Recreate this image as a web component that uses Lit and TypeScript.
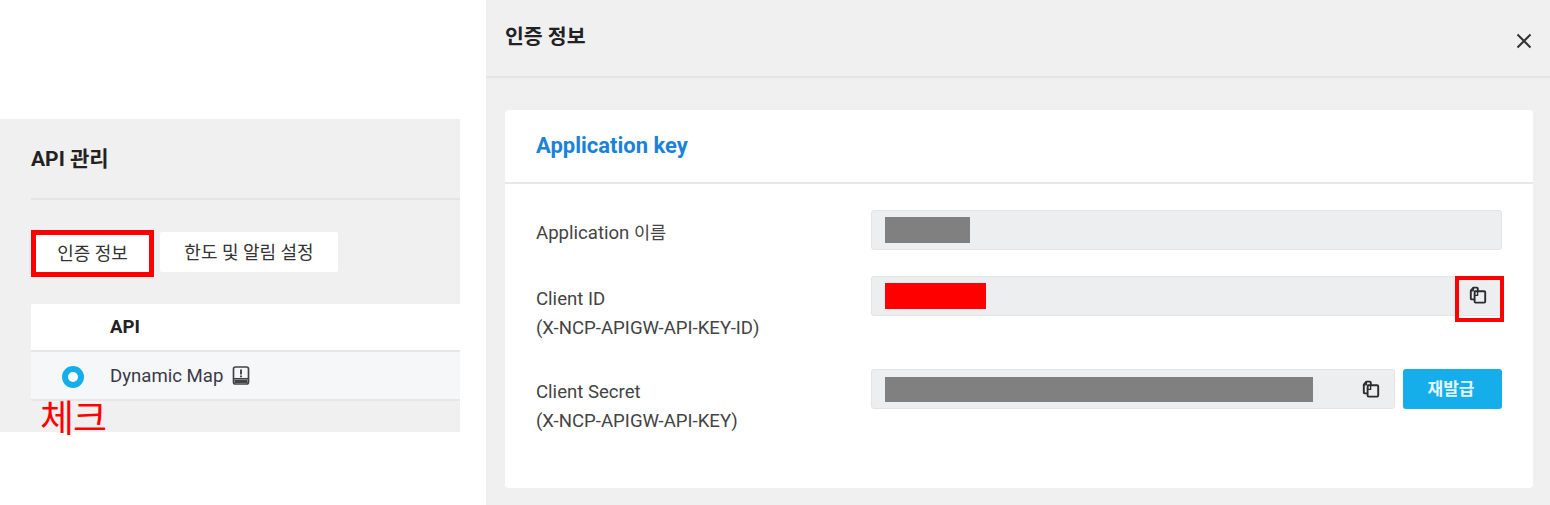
import { LitElement, html, css, svg } from "lit";
import { customElement } from "lit/decorators.js";

const copyIcon = svg`<svg class="copy" viewBox="0 0 18 18" width="18" height="18" fill="none" stroke="#2c2c2c" stroke-width="1.9" stroke-linejoin="round"><path d="M5.6 13.4H2.8a1 1 0 0 1-1-1V4.6L4.4 1.6h3.4a1 1 0 0 1 1 1v2.6"/><path d="M6 5.2h9.2a1 1 0 0 1 1 1v9.4a1 1 0 0 1-1 1H6.6a1 1 0 0 1-1-1V7.4z"/><path d="M8.6 5.4v4H5.8" stroke-width="1.4"/><path d="M4.4 1.8v3H2" stroke-width="1.3"/></svg>`;

@customElement("app-root")
export class AppRoot extends LitElement {
  static styles = css`
    :host { display: flex; width: 1550px; height: 505px; overflow: hidden; background: #fff; font-family: Roboto, "Noto Sans CJK KR", sans-serif; color: #333; font-size: 18.6px; }
    .left { position: relative; box-sizing: border-box; width: 460px; height: 313px; margin-top: 119px; margin-right: 26px; background: #f0f0f0; padding-left: 31px; }
    .lhead { box-sizing: border-box; height: 81px; border-bottom: 2px solid #e4e4e4; display: flex; align-items: center; padding-bottom: 4px; font-size: 21px; font-weight: 700; color: #222; }
    .tabs { display: flex; gap: 6px; margin-top: 32px; height: 40px; }
    .tab { box-sizing: border-box; height: 40px; background: #fff; border-radius: 2px; display: flex; align-items: center; justify-content: center; font-size: 18px; color: #333; padding-bottom: 2px; }
    .tab.one { width: 123px; height: 47px; margin-top: -2px; border: 5px solid #f00; border-radius: 0; background: #fff; padding-bottom: 4px; }
    .tab.two { width: 178px; }
    .thead { margin-top: 32px; height: 46px; background: #fff; border-bottom: 2px solid #e6e6e6; display: flex; align-items: center; padding-left: 79px; font-weight: 700; font-size: 18.6px; color: #222; border-radius: 2px 0 0 0; }
    .trow { height: 47px; background: #f6f7f9; border-bottom: 2px solid #e6e6e6; display: flex; align-items: center; font-size: 18.6px; color: #3a3a4a; }
    .radio { box-sizing: border-box; width: 22px; height: 22px; border: 6px solid #15aeea; border-radius: 50%; background: #fff; margin: 3px 26px 0 31px; }
    .book { margin-left: 9px; }
    .check { position: absolute; left: 40px; top: 276px; font-size: 37px; line-height: 42px; color: #f00; font-family: "Noto Sans CJK KR", sans-serif; letter-spacing: -1px; }
    .right { width: 1064px; height: 505px; background: #f0f0f0; display: flex; flex-direction: column; }
    .rhead { box-sizing: border-box; height: 78px; border-bottom: 2px solid #e4e4e4; display: flex; justify-content: space-between; padding: 24px 18px 0 19px; font-size: 20.5px; font-weight: 700; color: #222; }
    .rhead span { line-height: 26px; }
    .close { margin-top: 9px; }
    .card { box-sizing: border-box; width: 1028px; height: 378px; margin: 32px 0 0 19px; background: #fff; border-radius: 4px; }
    .ctitle { box-sizing: border-box; height: 74px; border-bottom: 2px solid #e8e8e8; padding: 0 0 2px 31px; display: flex; align-items: center; font-size: 22px; font-weight: 700; color: #1a82d9; }
    .form { padding: 26px 31px 0; display: flex; flex-direction: column; }
    .row { display: grid; grid-template-columns: 335px 1fr; font-size: 18.6px; line-height: 29px; color: #444; }
    .row.a { height: 66px; }
    .row.b { height: 93px; }
    .lab { padding-top: 9px; }
    .ko { font-size: 17.5px; }
    .ctrl { display: flex; gap: 8px; height: 40px; }
    .input { position: relative; box-sizing: border-box; flex: 1; height: 40px; background: #edeef0; border: 1px solid #e4e4e4; border-radius: 3px; display: flex; align-items: center; justify-content: space-between; padding: 0 14px 0 13px; }
    .mask { display: block; }
    .mask.gray { background: #808080; }
    .mask.red { background: #f00; }
    .btn { width: 99px; height: 40px; background: #15aeea; border-radius: 3px; color: #e4f6fd; font-weight: 700; font-size: 17px; display: flex; align-items: center; justify-content: center; padding-right: 3px; box-sizing: border-box; }
    .copybox { position: absolute; right: -3px; top: -1px; box-sizing: border-box; width: 49px; height: 46px; border: 4px solid #f00; display: flex; align-items: center; justify-content: center; padding: 0 3px 8px 0; }
    .copy { display: block; }
    .sec { padding-right: 14px; }
  `;

  render() {
    return html`
      <div class="left">
        <div class="lhead">API 관리</div>
        <div class="tabs">
          <div class="tab one">인증 정보</div>
          <div class="tab two">한도 및 알림 설정</div>
        </div>
        <div class="thead">API</div>
        <div class="trow">
          <span class="radio"></span>
          <span>Dynamic Map</span>
          <svg class="book" viewBox="0 0 18 19" width="18" height="19" fill="none" stroke="#444" stroke-width="1.7"><rect x="1.5" y="1" width="15" height="17" rx="2"/><path d="M2 12.8h14"/><path d="M9 3.5v5M9 9.6v1.6" stroke-width="1.9"/><path d="M2.5 15.5h13" stroke-width="3"/></svg>
        </div>
        <div class="check">체크</div>
      </div>
      <div class="right">
        <div class="rhead">
          <span>인증 정보</span>
          <svg class="close" viewBox="0 0 16 16" width="16" height="16" stroke="#333" stroke-width="2"><path d="M1.5 1.5l13 13M14.5 1.5l-13 13"/></svg>
        </div>
        <div class="card">
          <div class="ctitle">Application key</div>
          <div class="form">
            <div class="row a">
              <div class="lab">Application <span class="ko">이름</span></div>
              <div class="ctrl"><div class="input"><i class="mask gray" style="width:85px;height:26px"></i></div></div>
            </div>
            <div class="row b">
              <div class="lab">Client ID<br />(X-NCP-APIGW-API-KEY-ID)</div>
              <div class="ctrl">
                <div class="input">
                  <i class="mask red" style="width:101px;height:26px"></i>
                  <div class="copybox">${copyIcon}</div>
                </div>
              </div>
            </div>
            <div class="row">
              <div class="lab">Client Secret<br />(X-NCP-APIGW-API-KEY)</div>
              <div class="ctrl">
                <div class="input sec">
                  <i class="mask gray" style="width:428px;height:25px"></i>
                  ${copyIcon}
                </div>
                <div class="btn">재발급</div>
              </div>
            </div>
          </div>
        </div>
      </div>
    `;
  }
}
